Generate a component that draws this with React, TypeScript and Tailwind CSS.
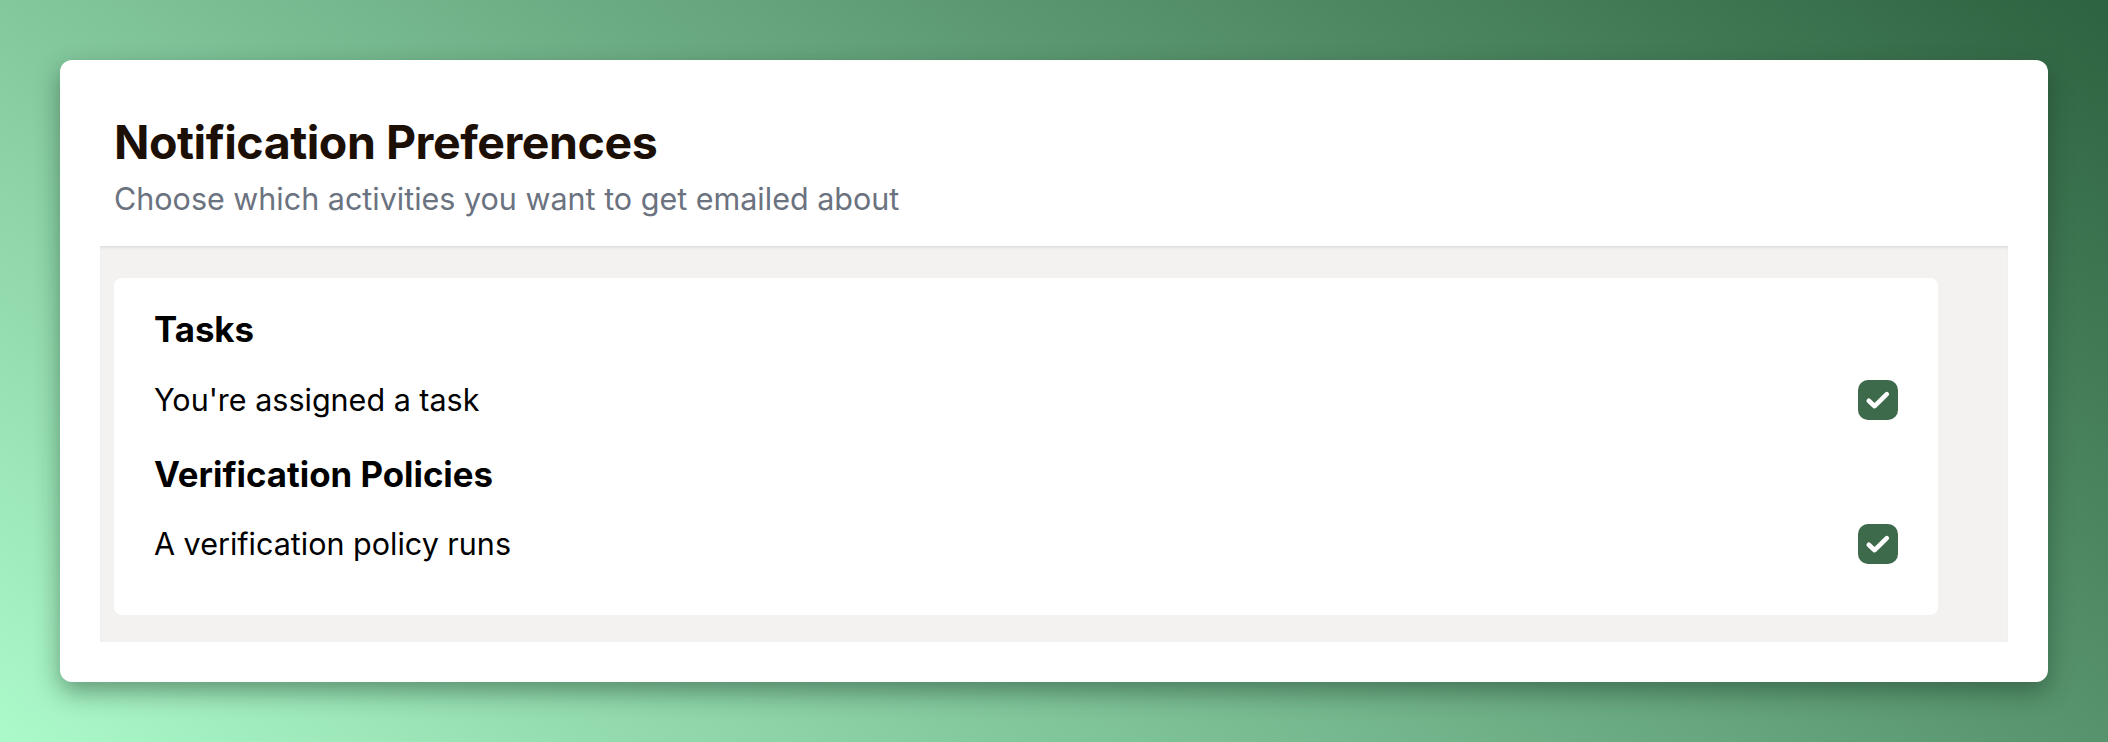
import React from "react";

function Check() {
  return (
    <div className="w-[40px] h-[40px] rounded-[10px] bg-[#3c6a4b] flex items-center justify-center shrink-0">
      <svg width="40" height="40" viewBox="0 0 40 40" fill="none">
        <path d="M10.8 20.8 L16.6 26.2 L28.8 14.2" stroke="white" strokeWidth="4.6" strokeLinecap="round" strokeLinejoin="round" />
      </svg>
    </div>
  );
}

export default function App() {
  return (
    <div
      className="w-full h-[742px] p-[60px] bg-[linear-gradient(36deg,#acf9ca,#2e6240)]"
      style={{ fontFamily: "Inter, 'Noto Sans', sans-serif" }}
    >
      <div className="h-full bg-white rounded-xl shadow-[0_10px_25px_rgba(20,50,30,0.45)] flex flex-col">
        <div className="pl-[54px] pt-[54px] pb-[29px]">
          <h1 className="text-[46.5px] leading-[56px] font-bold text-[#1b0f06] tracking-[-0.01em]">
            Notification Preferences
          </h1>
          <p className="mt-[11px] text-[30.5px] leading-[36px] text-[#6b7280]">
            Choose which activities you want to get emailed about
          </p>
        </div>
        <div className="mx-[40px] flex-1 bg-[#f3f2f1] shadow-[inset_0_3px_4px_-3px_rgba(0,0,0,0.18)] pt-[32px] pl-[14px] pr-[70px] pb-[27px] mb-[40px]">
          <div className="h-full bg-white rounded-lg px-[40px] pt-[31px]">
            <h2 className="text-[34.8px] leading-[40px] font-bold text-black">Tasks</h2>
            <div className="mt-[31px] flex items-center justify-between h-[40px]">
              <span className="text-[30.5px] text-black leading-[40px]">You're assigned a task</span>
              <Check />
            </div>
            <h2 className="mt-[34px] text-[34.8px] leading-[40px] font-bold text-black">Verification Policies</h2>
            <div className="mt-[30px] flex items-center justify-between h-[40px]">
              <span className="text-[30.5px] text-black leading-[40px]">A verification policy runs</span>
              <Check />
            </div>
          </div>
        </div>
      </div>
    </div>
  );
}
